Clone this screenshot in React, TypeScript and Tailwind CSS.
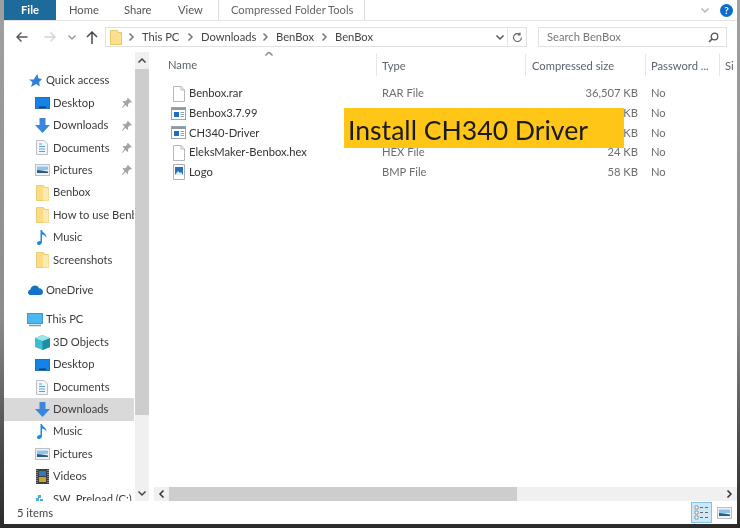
import { ReactNode } from 'react';

const PinIcon = () => (
  <svg width="12" height="12" viewBox="0 0 12 12" className="shrink-0">
    <path d="M7 1l4 4-1 .6-1-.3-2 2 .2 2-.8.7-2-2L1.500 11 1 10.500 3.600 6.800l-2-2 .7-.8 2 .2 2-2L6 1.400z" fill="#a3a3a3" />
  </svg>
);

const FolderIcon = () => (
  <svg width="13" height="16" viewBox="0 0 13 16">
    <path d="M.5.500h7l1.500 2h3.500v13H.5z" fill="#fbdc84" stroke="#edcd72" strokeWidth="1" />
    <path d="M7 3h5.500v12.500H7z" fill="#fdeab2" />
  </svg>
);

const DesktopIcon = () => (
  <svg width="15" height="12" viewBox="0 0 15 12">
    <rect x="0.500" y="0.500" width="14" height="11" fill="#1583e6" stroke="#2b6ea8" />
    <rect x="4" y="9.500" width="7" height="1.500" fill="#0c3f73" />
  </svg>
);

const DownloadIcon = () => (
  <svg width="15" height="15" viewBox="0 0 15 15">
    <path d="M4.500 0h6v7H15l-7.500 8L0 7h4.500z" fill="#3a86dc" />
  </svg>
);

const DocumentsIcon = () => (
  <svg width="12" height="15" viewBox="0 0 12 15">
    <path d="M.5.500h7.500l3.500 3.500v10.500H.5z" fill="#f4f6f8" stroke="#bcc0c4" />
    <path d="M3 4h3M3 6.500h6M3 9h6M3 11.500h6" stroke="#5a9ad6" strokeWidth="1" />
  </svg>
);

const PicturesIcon = () => (
  <svg width="15" height="12" viewBox="0 0 15 12">
    <rect x="0.500" y="0.500" width="14" height="11" fill="#eef2f6" stroke="#b8c0c8" />
    <rect x="2" y="2.500" width="11" height="3.500" fill="#8fc3ea" />
    <path d="M2 6l5 .5 6 1V9H2z" fill="#2c5c7c" />
  </svg>
);

const MusicIcon = () => (
  <svg width="10" height="15" viewBox="0 0 10 15">
    <path d="M3.500 0h1.400c.3 3 4.800 3.300 4.600 7.800C8.800 6 7 4.800 5 4.500V12c0 1.800-1.800 3-3 3-1.200 0-2-.8-2-1.800 0-1.500 2-2.600 3.500-2.100z" fill="#1e88e5" />
  </svg>
);

const CloudIcon = () => (
  <svg width="15" height="10" viewBox="0 0 15 10">
    <path d="M3 10C1 10 0 8.800 0 7.400 0 6 1 5 2.200 4.800 2.800 2 4.800.4 7 .4c1.900 0 3.400 1 4 2.800C13.300 3.200 15 5 15 7c0 1.800-1.200 3-2.800 3z" fill="#1473c4" />
  </svg>
);

const PcIcon = () => (
  <svg width="16" height="14" viewBox="0 0 16 14">
    <rect x="0.500" y="0.500" width="15" height="10" fill="#4cb8f0" stroke="#3a9ad2" />
    <path d="M2 12.500h12" stroke="#7a9ab0" strokeWidth="1.500" />
  </svg>
);

const CubeIcon = () => (
  <svg width="15" height="15" viewBox="0 0 15 15">
    <path d="M7.500 0L15 3v9l-7.500 3L0 12V3z" fill="#3fbdd0" />
    <path d="M7.500 6L15 3v9l-7.500 3z" fill="#1d8ea3" />
    <path d="M7.500 6L0 3l7.500-3L15 3z" fill="#9ce5ee" />
  </svg>
);

const VideosIcon = () => (
  <svg width="13" height="15" viewBox="0 0 13 15">
    <rect width="13" height="15" fill="#3c4045" />
    <rect x="3" y="2" width="7" height="5" fill="#3478b8" />
    <rect x="3" y="8" width="7" height="5" fill="#c8a528" />
    <path d="M1 1v13M12 1v13" stroke="#c5c8cc" strokeWidth="1" strokeDasharray="1 1" />
  </svg>
);

const DriveIcon = () => (
  <svg width="15" height="13" viewBox="0 0 15 13">
    <path d="M1 9h14v3H1z" fill="#d0d4d8" />
    <path d="M3 2h3v3H3zM1 5h3v3H1zM5 6h3v2H5z" fill="#4aaee4" />
  </svg>
);

const StarIcon = () => (
  <svg width="13" height="13" viewBox="0 0 14 14">
    <path d="M9 0l1 4.500 4 .8-3 3.200.6 5-3.800-2.600L2 14l1.800-5L0 6h5z" fill="#2f80d8" />
  </svg>
);

const TextFileIcon = () => (
  <svg width="12" height="16" viewBox="0 0 12 16">
    <path d="M.5.500h7.500l3.500 3.500v11.500H.5z" fill="#fff" stroke="#b8b8b8" />
    <path d="M8 .5V4h3.500" fill="none" stroke="#b8b8b8" />
  </svg>
);

const AppIcon = () => (
  <svg width="15" height="13" viewBox="0 0 15 13">
    <rect x="0.500" y="0.500" width="14" height="12" fill="#fff" stroke="#98a4b0" />
    <rect x="1" y="1" width="13" height="2" fill="#8c98a4" />
    <rect x="3" y="5" width="5" height="5" fill="#1c6fc4" />
    <path d="M9.500 5.500H13M9.500 7.500H13M9.500 9.500H13" stroke="#98a4b0" />
  </svg>
);

const BmpIcon = () => (
  <svg width="12" height="16" viewBox="0 0 12 16">
    <path d="M.5.500h11v15H.5z" fill="#fff" stroke="#a8b0b8" />
    <rect x="2" y="3" width="8" height="8" fill="#2a6fb8" />
    <path d="M2 11l3-4 2 2 1-1 2 3z" fill="#dfeefa" />
  </svg>
);

const Chevron = ({ dir, className = '' }: { dir: 'up' | 'down' | 'left' | 'right'; className?: string }) => {
  const paths = {
    up: 'M1.500 6.500L5 3l3.500 3.500',
    down: 'M1.500 3.500L5 7l3.500-3.500',
    left: 'M6.500 1.500L3 5l3.500 3.500',
    right: 'M3.500 1.500L7 5 3.500 8.500',
  };
  return (
    <svg width="10" height="10" viewBox="0 0 10 10" className={className}>
      <path d={paths[dir]} fill="none" stroke="currentColor" strokeWidth="1.500" />
    </svg>
  );
};

const ArrowLeft = ({ color }: { color: string }) => (
  <svg width="12" height="12" viewBox="0 0 12 12">
    <path d="M11.500 6H1M5.500 1.500L1 6l4.500 4.500" fill="none" stroke={color} strokeWidth="1.400" />
  </svg>
);

const ArrowRight = ({ color }: { color: string }) => (
  <svg width="12" height="12" viewBox="0 0 12 12">
    <path d="M.5 6H11M6.500 1.500L11 6l-4.500 4.500" fill="none" stroke={color} strokeWidth="1.400" />
  </svg>
);

function NavItem({ icon, label, top, pinned, selected, gap }: {
  icon: ReactNode;
  label: string;
  top?: boolean;
  pinned?: boolean;
  selected?: boolean;
  gap?: boolean;
}) {
  return (
    <div
      className={`flex h-[22.4px] shrink-0 items-center ${top ? 'pl-[23px]' : 'pl-[30px]'} ${gap ? 'mt-[7.6px]' : ''} ${selected ? 'bg-[#d9d9d9]' : ''}`}
    >
      <span className="flex w-[16px] shrink-0 justify-center">{icon}</span>
      <span className="ml-[3px] flex-1 overflow-hidden whitespace-nowrap">{label}</span>
      {pinned && <span className="mr-[1px] ml-1 flex"><PinIcon /></span>}
    </div>
  );
}

const files = [
  { name: 'Benbox.rar', type: 'RAR File', size: '36,507 KB', icon: <TextFileIcon /> },
  { name: 'Benbox3.7.99', type: 'Application', size: '4,128 KB', icon: <AppIcon /> },
  { name: 'CH340-Driver', type: 'Application', size: '276 KB', icon: <AppIcon /> },
  { name: 'EleksMaker-Benbox.hex', type: 'HEX File', size: '24 KB', icon: <TextFileIcon /> },
  { name: 'Logo', type: 'BMP File', size: '58 KB', icon: <BmpIcon /> },
];

const crumbs = [
  { id: 'pc', label: 'This PC', className: 'w-[59px]' },
  { id: 'dl', label: 'Downloads', className: 'w-[75px]' },
  { id: 'bb1', label: 'BenBox', className: 'w-[59px]' },
  { id: 'bb2', label: 'BenBox', className: 'w-[59px]' },
];

export default function App() {
  return (
    <div
      className="relative flex h-[528px] w-[740px] overflow-hidden bg-[linear-gradient(180deg,#a0a0a0_0%,#8c8c8c_60%,#4a4a4a_85%,#2b2a28_100%)] pr-[3px] pb-[4px] pl-[4px] text-[11.2px] text-[#3c3c3c] blur-[0.3px]"
      style={{ fontFamily: 'Lato, "Open Sans", sans-serif' }}
    >
      <div className="flex min-w-0 flex-1 flex-col bg-white">
        {/* ribbon tabs */}
        <div className="flex h-[21px] shrink-0 items-stretch border-b border-[#e3e3e3] text-[#555]">
          <div className="flex w-[52px] items-center justify-center bg-[#1c6b9a] pt-[1px] font-bold text-white">File</div>
          <span className="ml-[13px] flex w-[28px] items-center pt-[1px]">Home</span>
          <span className="ml-[27px] flex w-[27px] items-center pt-[1px]">Share</span>
          <span className="ml-[27px] flex w-[24px] items-center pt-[1px]">View</span>
          <span className="ml-[16px] flex w-[146px] items-center border-l border-[#dcdcdc] pt-[1px] pl-[12px] whitespace-nowrap text-[#666]">Compressed Folder Tools</span>
          <span className="border-r border-[#dcdcdc]" />
          <div className="ml-auto flex items-center gap-[10px] pr-[4px]">
            <Chevron dir="down" className="text-[#b5b5b5]" />
            <span className="flex h-[13px] w-[13px] items-center justify-center rounded-full bg-[#0f6cc8] text-[10px] font-bold text-white">?</span>
          </div>
        </div>

        {/* address row */}
        <div className="flex h-[31px] shrink-0 items-center pt-[1px]">
          <span className="ml-[12px] flex"><ArrowLeft color="#555" /></span>
          <span className="ml-[16px] flex"><ArrowRight color="#d4d4d4" /></span>
          <span className="ml-[11px] flex text-[#999]"><Chevron dir="down" /></span>
          <span className="ml-[9px] flex"><svg width="12" height="13" viewBox="0 0 12 13"><path d="M6 13V1M1 6l5-5 5 5" fill="none" stroke="#4a4a4a" strokeWidth="1.500" /></svg></span>
          <div className="ml-[7px] flex h-[20px] w-[422px] items-center border border-[#e0e0e0] text-[#444]">
            <span className="ml-[4px] flex"><svg width="12" height="15" viewBox="0 0 12 15"><path d="M.5.500h7l1 2h3v12H.5z" fill="#fce08f" stroke="#e9c765" /></svg></span>
            {crumbs.map((c) => (
              <span key={c.id} className={`flex items-center ${c.className}`}>
                <Chevron dir="right" className="mr-[6px] ml-[4px] shrink-0 text-[#777]" />
                <span className="whitespace-nowrap">{c.label}</span>
              </span>
            ))}
            <span className="ml-auto flex text-[#555]"><Chevron dir="down" /></span>
            <span className="ml-[2px] flex h-full w-[19px] items-center justify-center border-l border-[#e6e6e6]">
              <svg width="11" height="11" viewBox="0 0 11 11"><path d="M9.500 5.500a4 4 0 1 1-1.500-3.100M8 .5v2.400H5.600" fill="none" stroke="#666" strokeWidth="1.100" /></svg>
            </span>
          </div>
          <div className="ml-[11px] flex h-[20px] w-[189px] items-center justify-between border border-[#e0e0e0] pr-[7px] pl-[8px] text-[#777]">
            <span>Search BenBox</span>
            <svg width="11" height="11" viewBox="0 0 11 11"><circle cx="6.500" cy="4.500" r="3.300" fill="none" stroke="#555" strokeWidth="1.300" /><path d="M4 7l-3 3" stroke="#555" strokeWidth="1.600" /></svg>
          </div>
        </div>

        <div className="flex min-h-0 flex-1">
          {/* nav pane */}
          <div className="flex w-[130px] shrink-0 flex-col overflow-hidden pt-[17.6px]">
            <NavItem top icon={<StarIcon />} label="Quick access" />
            <NavItem pinned icon={<DesktopIcon />} label="Desktop" />
            <NavItem pinned icon={<DownloadIcon />} label="Downloads" />
            <NavItem pinned icon={<DocumentsIcon />} label="Documents" />
            <NavItem pinned icon={<PicturesIcon />} label="Pictures" />
            <NavItem icon={<FolderIcon />} label="Benbox" />
            <NavItem icon={<FolderIcon />} label="How to use Benbox" />
            <NavItem icon={<MusicIcon />} label="Music" />
            <NavItem icon={<FolderIcon />} label="Screenshots" />
            <NavItem top gap icon={<CloudIcon />} label="OneDrive" />
            <NavItem top gap icon={<PcIcon />} label="This PC" />
            <NavItem icon={<CubeIcon />} label="3D Objects" />
            <NavItem icon={<DesktopIcon />} label="Desktop" />
            <NavItem icon={<DocumentsIcon />} label="Documents" />
            <NavItem selected icon={<DownloadIcon />} label="Downloads" />
            <NavItem icon={<MusicIcon />} label="Music" />
            <NavItem icon={<PicturesIcon />} label="Pictures" />
            <NavItem icon={<VideosIcon />} label="Videos" />
            <NavItem icon={<DriveIcon />} label="SW_Preload (C:)" />
          </div>

          {/* nav scrollbar */}
          <div className="ml-[1px] flex w-[14px] shrink-0 flex-col bg-[#f0f0f0] text-[#444]">
            <div className="flex h-[17px] shrink-0 items-center justify-center"><Chevron dir="up" /></div>
            <div className="h-[346px] shrink-0 bg-[#cdcdcd]" />
            <div className="mt-auto flex h-[17px] shrink-0 items-center justify-center"><Chevron dir="down" /></div>
          </div>

          {/* file list */}
          <div className="flex min-w-0 flex-1 flex-col pl-[5px]">
            <div className="relative flex-1 overflow-hidden">
              <div className="relative flex h-[25px] items-center whitespace-nowrap text-[#5a6470]">
                <span className="absolute top-[-3px] left-[110px] text-[#888]"><Chevron dir="up" /></span>
                <span className="w-[222px] pt-[1px] pl-[14px]">Name</span>
                <span className="h-[22px] w-[149px] border-l border-[#e6e6e6] pt-[4px] pl-[5px]">Type</span>
                <span className="h-[22px] w-[120px] border-l border-[#e6e6e6] pt-[4px] pl-[6px]">Compressed size</span>
                <span className="h-[22px] w-[74px] border-l border-[#e6e6e6] pt-[4px] pl-[5px]">Password ...</span>
                <span className="h-[22px] flex-1 border-l border-[#e6e6e6] pt-[4px] pl-[5px]">Si</span>
              </div>
              <div className="mt-[7px] flex flex-col">
                {files.map((f) => (
                  <div key={f.name} className="flex h-[19.6px] items-center whitespace-nowrap">
                    <span className="flex w-[222px] items-center pl-[17px]">
                      <span className="flex w-[15px] shrink-0 justify-center">{f.icon}</span>
                      <span className="ml-[3px] text-[#333]">{f.name}</span>
                    </span>
                    <span className="w-[149px] pl-[6px] text-[#6d6d6d]">{f.type}</span>
                    <span className="w-[113px] text-right text-[#6d6d6d]">{f.size}</span>
                    <span className="ml-[13px] text-[#6d6d6d]">No</span>
                  </div>
                ))}
              </div>
            </div>

            {/* horizontal scrollbar */}
            <div className="flex h-[14px] shrink-0 items-center bg-[#f0f0f0] text-[#333]">
              <div className="flex w-[15px] shrink-0 justify-center"><Chevron dir="left" /></div>
              <div className="h-full w-[348px] shrink-0 bg-[#cdcdcd]" />
              <div className="mr-[1px] ml-auto flex w-[14px] shrink-0 justify-center"><Chevron dir="right" /></div>
            </div>
          </div>
        </div>

        {/* status bar */}
        <div className="flex h-[23px] shrink-0 items-center justify-between pr-[6px] pl-[13px] text-[#444]">
          <span className="pt-[1px]">5 items</span>
          <div className="mr-[-2px] flex items-center gap-[3px]">
            <span className="flex h-[21px] w-[21px] items-center justify-center border border-[#7ec4ea] bg-[#cfe8f8]">
              <svg width="15" height="15" viewBox="0 0 15 15"><path d="M1 1h3v3H1zM1 6h3v3H1zM1 11h3v3H1z" fill="#fff" stroke="#777" strokeWidth="0.700" /><path d="M6 2.500h3M11 2.500h3M6 7.500h3M11 7.500h3M6 12.500h3M11 12.500h3" stroke="#666" /></svg>
            </span>
            <span className="flex h-[21px] w-[18px] items-center justify-center">
              <PicturesIcon />
            </span>
          </div>
        </div>
      </div>

      {/* yellow caption pasted on top of the shot */}
      <div className="absolute top-[108px] left-[344px] flex h-[40px] w-[280px] items-end bg-[#ffc618] pl-[4px] text-[26.6px] leading-[36px] text-[#1a1a1a]">
        Install CH340 Driver
      </div>
    </div>
  );
}
